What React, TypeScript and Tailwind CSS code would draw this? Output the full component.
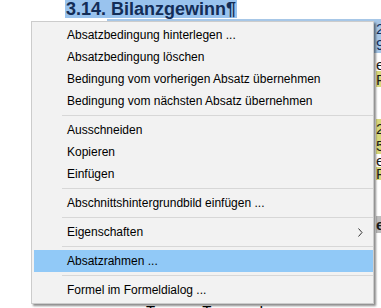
import { Fragment } from "react";

type Entry = { label: string; sub?: boolean; active?: boolean } | "sep";

const entries: Entry[] = [
  { label: "Absatzbedingung hinterlegen ..." },
  { label: "Absatzbedingung löschen" },
  { label: "Bedingung vom vorherigen Absatz übernehmen" },
  { label: "Bedingung vom nächsten Absatz übernehmen" },
  "sep",
  { label: "Ausschneiden" },
  { label: "Kopieren" },
  { label: "Einfügen" },
  "sep",
  { label: "Abschnittshintergrundbild einfügen ..." },
  "sep",
  { label: "Eigenschaften", sub: true },
  "sep",
  { label: "Absatzrahmen ...", active: true },
  "sep",
  { label: "Formel im Formeldialog ..." },
];

const Chevron = () => (
  <svg width="5" height="9" viewBox="0 0 5 9" className="block">
    <path d="M0.5 0.5 L4 4.5 L0.5 8.5" fill="none" stroke="#333" strokeWidth="1" />
  </svg>
);

const DocLine = ({ h, bg, text, bold }: { h: string; bg?: string; text?: string; bold?: boolean }) => (
  <div className={`${h} flex items-center overflow-hidden`}>
    <div className={`ml-[376px] w-[8px] h-full flex items-center ${bg ?? ""}`}>
      <span className={`text-[15px] leading-none text-[#1a1a1a] whitespace-nowrap ${bold ? "font-bold" : ""}`}>{text}</span>
    </div>
  </div>
);

const App = () => {
  return (
    <div className="relative w-[381px] h-[308px] overflow-hidden bg-white font-['Liberation_Sans',Arial,sans-serif]">
      <div className="flex flex-col">
        <div className="h-[19px] pl-[65px] flex items-start">
          <span className="bg-[#99c3ee] text-[#132d57] font-bold text-[18px] leading-[18px] px-[1px]">
            3.14. Bilanzgewinn¶
          </span>
        </div>
        <div className="h-[34px] ml-[107px] bg-[#a7c7e7] overflow-hidden">
          <div className="pl-[269px] pt-[2px] text-[15px] leading-[16px] text-[#14305c]">
            <div>2</div>
            <div>9</div>
          </div>
        </div>
        <div className="h-[4px]" />
        <DocLine h="h-[14px]" text="e" />
        <DocLine h="h-[16px]" bg="bg-[#d8d87c]" text="R" />
        <div className="h-[32px]" />
        <DocLine h="h-[18px]" bg="bg-[#d8d87c]" text="2(" />
        <DocLine h="h-[17px]" bg="bg-[#d8d87c]" text="5" />
        <DocLine h="h-[13px]" text="e" />
        <DocLine h="h-[13px]" bg="bg-[#d8d87c]" text="R" />
        <div className="h-[36px]" />
        <DocLine h="h-[17px]" bg="bg-[#bdbdbd]" text="e|" bold />
        <div className="h-[70px]" />
        <div className="flex text-[15px] leading-[16px] text-black whitespace-nowrap">
          <span className="ml-[146px]">T</span>
          <span className="ml-[47px]">T</span>
          <span className="ml-[48px]">I</span>
        </div>
      </div>

      <div className="absolute left-[31px] top-[21px] w-[343px] bg-[#f2f2f2] border border-[#cccccc] py-[2px] shadow-[2px_2px_2px_rgba(0,0,0,0.45)] font-['Liberation_Sans',Arial,sans-serif] text-[12px] text-black">
        {entries.map((e, i) =>
          e === "sep" ? (
            <div key={i} className="h-[7px] flex items-center pl-[30px]">
              <div className="h-px w-full bg-[#d7d7d7]" />
            </div>
          ) : (
            <Fragment key={i}>
              <div
                className={`h-[22px] ml-[2px] pl-[33px] pr-[10px] flex items-center justify-between whitespace-nowrap ${
                  e.active ? "bg-[#91c9f7]" : ""
                }`}
              >
                <span>{e.label}</span>
                {e.sub && <Chevron />}
              </div>
            </Fragment>
          )
        )}
      </div>
    </div>
  );
};

export default App;
